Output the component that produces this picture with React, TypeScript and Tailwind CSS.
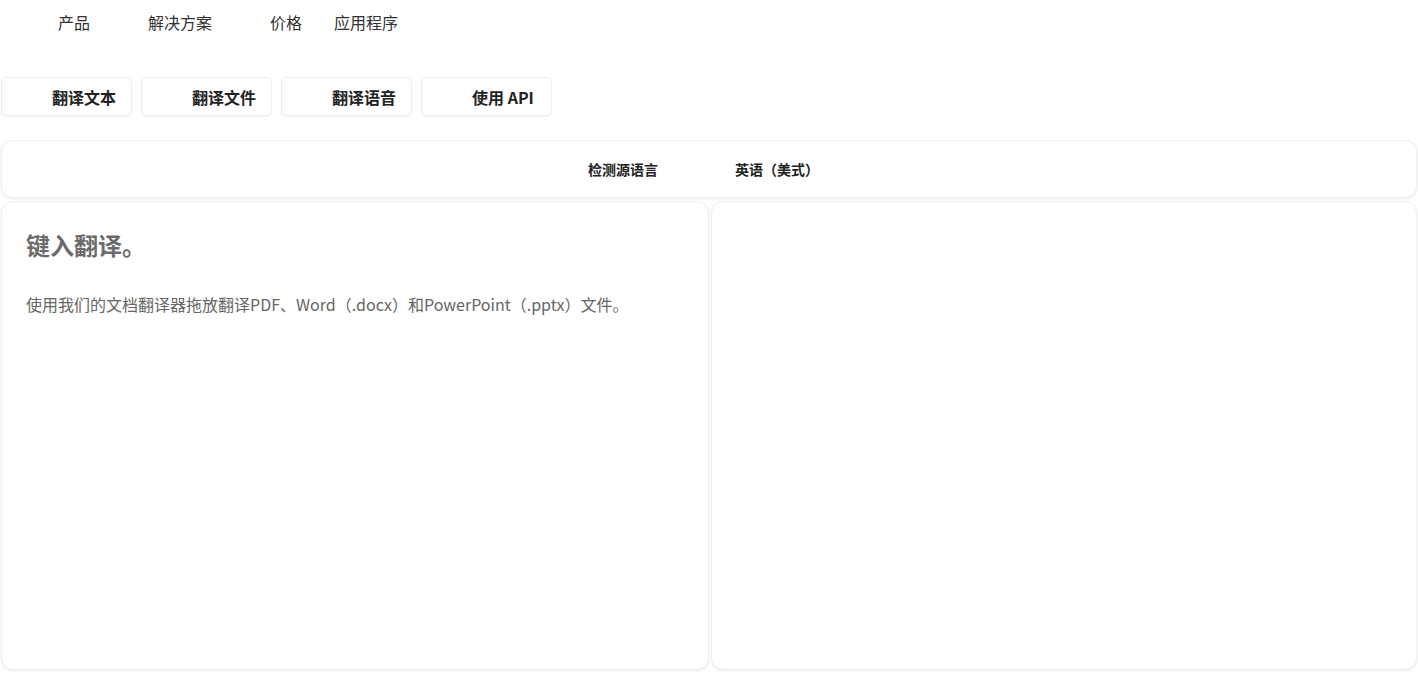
import React from "react";

const font = { fontFamily: '"Noto Sans CJK SC", "Noto Sans", sans-serif' };

export default function App() {
  const tabs = ["翻译文本", "翻译文件", "翻译语音", "使用 API"];
  return (
    <div className="w-[1418px] h-[685px] bg-white overflow-hidden text-[#1a1a1a]" style={font}>
      <nav className="flex items-center h-[44px] text-[16px] text-[#333]">
        <span className="ml-[58px]">产品</span>
        <span className="ml-[58px]">解决方案</span>
        <span className="ml-[58px]">价格</span>
        <span className="ml-[32px]">应用程序</span>
      </nav>
      <div className="flex gap-[9px] mt-[33px] pl-[1px]">
        {tabs.map((t) => (
          <button
            key={t}
            className="w-[131px] h-[39px] flex items-center pl-[50px] rounded-[6px] border border-[#ececec] bg-white shadow-[0_1px_2px_rgba(0,0,0,0.06)] text-[16px] font-bold text-[#222]"
          >
            {t}
          </button>
        ))}
      </div>
      <div className="mx-[1px] mt-[24px] h-[58px] rounded-[12px] border border-[#f0f0f0] bg-white shadow-[0_1px_3px_rgba(0,0,0,0.08)] flex items-center pl-[586px] gap-[77px] text-[14px] font-bold text-[#222]">
        <span>检测源语言</span>
        <span>英语（美式）</span>
      </div>
      <div className="flex gap-[2px] mt-[3px] mx-[1px] h-[469px]">
        <div className="w-[708px] rounded-[12px] border border-[#eeeeee] bg-white shadow-[0_1px_2px_rgba(0,0,0,0.08)] px-[24px] pt-[25px]">
          <h1 className="text-[24px] font-bold text-[#6b6b6b] leading-[36px]">键入翻译。</h1>
          <p className="mt-[29px] text-[16px] text-[#666]">
            使用我们的文档翻译器拖放翻译PDF、Word（.docx）和PowerPoint（.pptx）文件。
          </p>
        </div>
        <div className="flex-1 rounded-[12px] border border-[#eeeeee] bg-white shadow-[0_1px_2px_rgba(0,0,0,0.08)]" />
      </div>
    </div>
  );
}
